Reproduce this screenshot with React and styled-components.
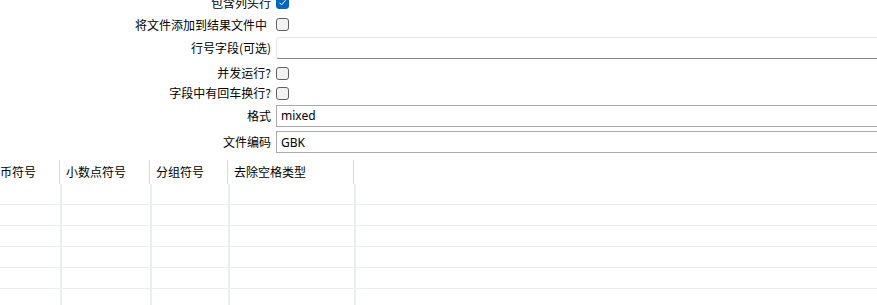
import React from "react";
import styled, { createGlobalStyle } from "styled-components";

const GlobalStyle = createGlobalStyle`
  html, body {
    margin: 0;
    padding: 0;
    background: #ffffff;
    overflow: hidden;
  }
  body {
    font-family: "Noto Sans CJK SC", "Noto Sans", sans-serif;
    font-size: 12px;
    color: #000;
  }
`;

const Page = styled.div`
  width: 877px;
  height: 305px;
  overflow: hidden;
`;

const Form = styled.div`
  display: flex;
  flex-direction: column;
  margin-top: -8px;
`;

const Row = styled.div`
  display: flex;
  align-items: center;
  height: ${(p) => p.$h}px;
`;

const Label = styled.div`
  width: 271px;
  flex: none;
  text-align: right;
  white-space: nowrap;
  line-height: 16px;
  margin-right: 5px;
  padding-right: ${(p) => p.$pad || 0}px;
  box-sizing: border-box;
`;

const Box = styled.span`
  display: inline-flex;
  align-items: center;
  justify-content: center;
  width: 13px;
  height: 13px;
  box-sizing: border-box;
  border-radius: 3px;
  border: 1px solid ${(p) => (p.$checked ? "#0067c0" : "#616161")};
  background: ${(p) => (p.$checked ? "#0067c0" : "#f2f2f2")};
`;

const TextField = styled.div`
  flex: 1;
  margin-right: -20px;
  height: 22px;
  box-sizing: border-box;
  background: #fff;
  border: 1px solid ${(p) => (p.$flat ? "#e6e6e6" : "#ababab")};
  border-bottom-color: ${(p) => (p.$flat ? "#868686" : "#ababab")};
  border-radius: ${(p) => (p.$flat ? "3px" : "0")};
  padding-left: 4px;
  display: flex;
  align-items: center;
  font-family: "Noto Sans", "Noto Sans CJK SC", sans-serif;
  font-size: 12px;
  color: #000;
`;

const Table = styled.div`
  margin-top: 7px;
  margin-left: -18px;
  display: grid;
  grid-template-columns: 78px 90px 78px 126px 1fr;
`;

const HeadCell = styled.div`
  height: 24px;
  line-height: 24px;
  padding-left: 6px;
  box-sizing: border-box;
  white-space: nowrap;
  overflow: hidden;
  border-right: ${(p) => (p.$last ? "none" : "1px solid #dadada")};
`;

const BodyCell = styled.div`
  height: 21px;
  box-sizing: border-box;
  border-bottom: 1px solid #ececec;
  border-left: ${(p) => (p.$first ? "none" : "2px solid #e9edf5")};
`;

function Check({ checked }) {
  return (
    <Box $checked={checked}>
      {checked && (
        <svg width="9" height="9" viewBox="0 0 9 9">
          <path d="M1.5 4.7 L3.6 6.8 L7.6 2.2" fill="none" stroke="#fff" strokeWidth="1" />
        </svg>
      )}
    </Box>
  );
}

const columns = ["货币符号", "小数点符号", "分组符号", "去除空格类型", ""];

export default function App() {
  const rows = [0, 1, 2, 3, 4, 5];
  return (
    <Page>
      <GlobalStyle />
      <Form>
        <Row $h={21}>
          <Label>包含列头行</Label>
          <Check checked />
        </Row>
        <Row $h={23}>
          <Label $pad={4}>将文件添加到结果文件中</Label>
          <Check />
        </Row>
        <Row $h={24}>
          <Label>行号字段(可选)</Label>
          <TextField $flat />
        </Row>
        <Row $h={26}>
          <Label>并发运行?</Label>
          <Check />
        </Row>
        <Row $h={14}>
          <Label>字段中有回车换行?</Label>
          <Check />
        </Row>
        <Row $h={31}>
          <Label>格式</Label>
          <TextField>mixed</TextField>
        </Row>
        <Row $h={22}>
          <Label>文件编码</Label>
          <TextField>GBK</TextField>
        </Row>
      </Form>
      <Table>
        {columns.map((c, i) => (
          <HeadCell key={i} $last={i === columns.length - 1}>
            {c}
          </HeadCell>
        ))}
        {rows.map((r) =>
          columns.map((c, i) => <BodyCell key={r + "-" + i} $first={i === 0} />)
        )}
      </Table>
    </Page>
  );
}
